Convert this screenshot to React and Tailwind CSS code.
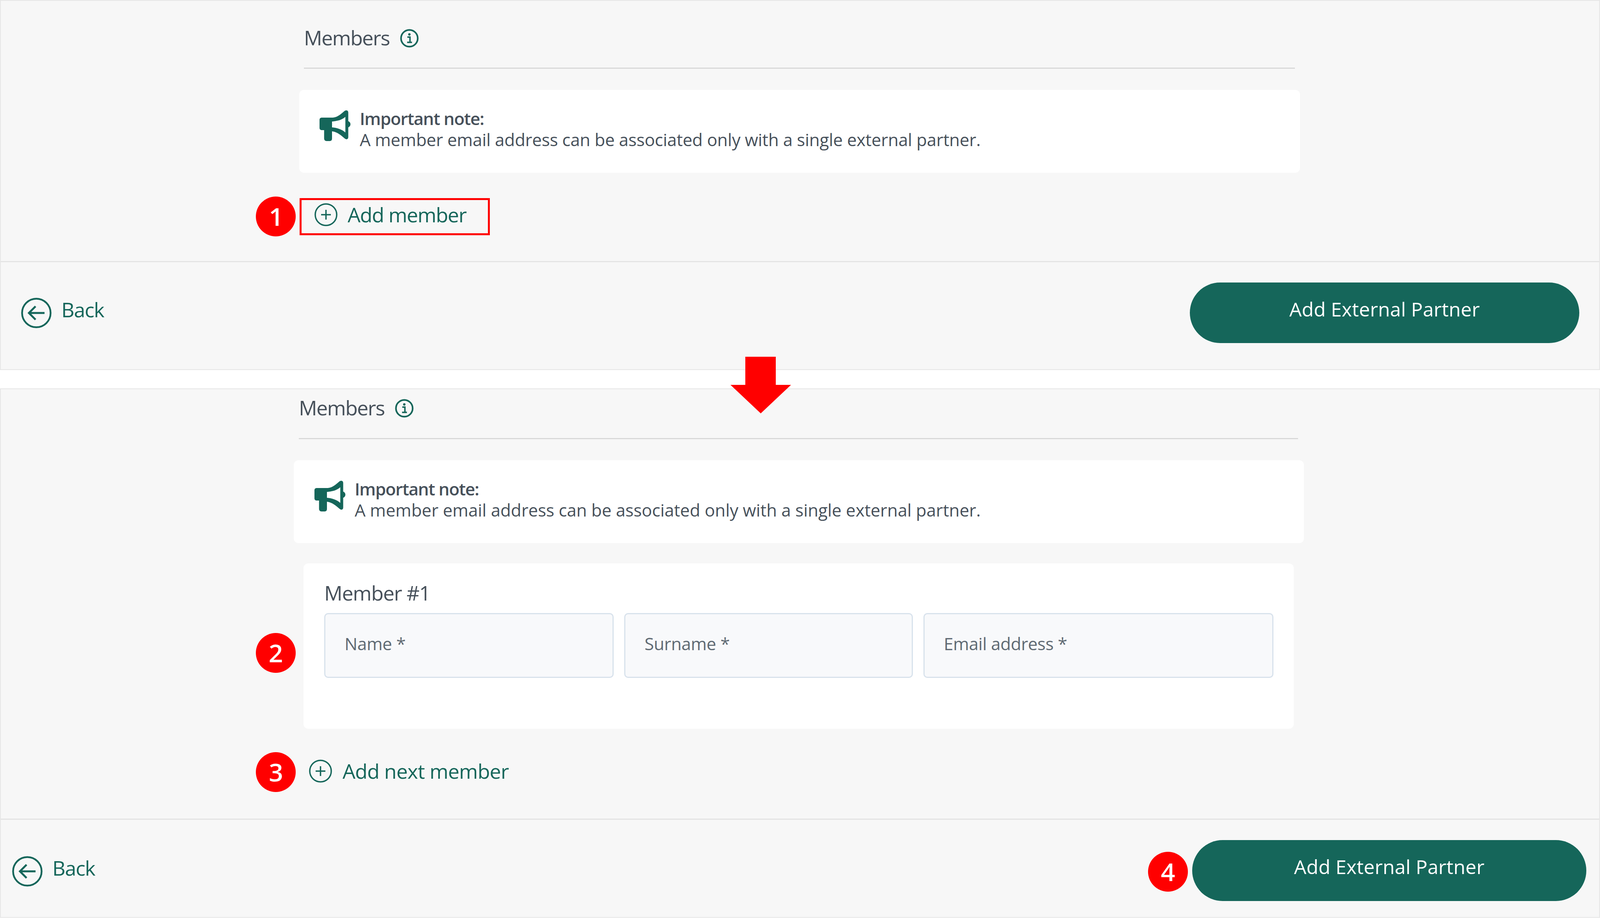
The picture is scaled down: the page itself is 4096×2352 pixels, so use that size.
import React from "react";

const teal = "#15665a";

function InfoIcon() {
  return (
    <svg width="48" height="48" viewBox="0 0 46 46" fill="none">
      <circle cx="23" cy="23" r="20.5" stroke={teal} strokeWidth="4" />
      <circle cx="23" cy="13.5" r="3" fill={teal} />
      <path d="M18 20h6.5v12M17.5 33h12" stroke={teal} strokeWidth="3.6" />
    </svg>
  );
}

function PlusIcon() {
  return (
    <svg width="59" height="59" viewBox="0 0 59 59" fill="none">
      <circle cx="29.5" cy="29.5" r="27.5" stroke={teal} strokeWidth="3.5" />
      <path d="M29.5 17v25M17 29.5h25" stroke={teal} strokeWidth="3.5" />
    </svg>
  );
}

function BackIcon() {
  return (
    <svg width="78" height="78" viewBox="0 0 78 78" fill="none">
      <circle cx="39" cy="39" r="36.5" stroke={teal} strokeWidth="4.5" />
      <path d="M60 39H21M37 22 20 39l17 17" stroke={teal} strokeWidth="5" />
    </svg>
  );
}

function Megaphone() {
  return (
    <svg width="80" height="80" viewBox="0 0 75 80" preserveAspectRatio="none" className="shrink-0">
      <path
        fillRule="evenodd"
        fill={teal}
        d="M6 20H32C44 19 52 10 60 3C65 0 69 2 69 7V29C76 32 76 42 69 45V70C69 76 64 77 60 73C52 66 44 57 30 55V73C30 78 28 80 24 80H17C13 80 11 77 11 73V52H6C2 52 0 50 0 46V26C0 22 2 20 6 20ZM30 30C42 29 54 26 62 18V58C54 50 42 46 30 45Z"
      />
    </svg>
  );
}

function Badge({ n, className }) {
  return (
    <div
      className={`absolute w-[102px] h-[102px] rounded-full bg-[#ff0000] flex items-center justify-center text-white text-[64px] font-semibold leading-none ${className}`}
    >
      {n}
    </div>
  );
}

function MembersHeader({ className }) {
  return (
    <div className={`flex items-center gap-[27px] border-b-[3px] border-[#d9d9d9] ${className}`}>
      <span className="text-[52px] leading-none tracking-[-1.7px] text-[#46505a] pb-[4px]">Members</span>
      <InfoIcon />
    </div>
  );
}

function NoteCard({ className, textClass }) {
  return (
    <div className={`h-[212px] bg-white rounded-[12px] flex items-start ${className}`}>
      <Megaphone />
      <div className="ml-[23px] mt-[-5px] text-[#46505a] text-[44px] leading-[54px]">
        <p className="font-semibold tracking-[-1.35px]">Important note:</p>
        <p className={textClass}>A member email address can be associated only with a single external partner.</p>
      </div>
    </div>
  );
}

function Field({ label, className }) {
  return (
    <div
      className={`h-[166px] bg-[#f8f9fb] border-[3px] border-[#d8e2ec] rounded-[10px] pl-[49px] pt-[48px] text-[44px] leading-[54px] tracking-[-0.4px] text-[#5f6a73] ${className}`}
    >
      {label}
    </div>
  );
}

function Footer({ className, backClass, buttonClass, badge }) {
  return (
    <div className={`mt-auto border-t-[3px] border-[#e4e4e4] flex items-center justify-between ${className}`}>
      <div className={`flex items-center gap-[25px] text-[52px] tracking-[-1.4px] leading-none ${backClass}`} style={{ color: teal }}>
        <BackIcon />
        <span className="pb-[18px]">Back</span>
      </div>
      <div className={`relative rounded-full bg-[#15665a] text-white text-[50px] tracking-[0.1px] flex items-center justify-center ${buttonClass}`}>
        {badge && <Badge n={4} className="left-[-113px] top-[30px]" />}
        <span className="pb-[18px]">Add External Partner</span>
      </div>
    </div>
  );
}

export default function App() {
  return (
    <div className="w-[4096px] h-[2352px] bg-white overflow-hidden relative font-['Open_Sans',sans-serif]">
      {/* top state */}
      <div className="h-[947px] bg-[#f7f7f7] border-2 border-[#e6e6e6] flex flex-col">
        <MembersHeader className="ml-[776px] w-[2537px] h-[174px] pt-[21px]" />
        <NoteCard className="mt-[54px] ml-[764px] w-[2562px] pl-[52px] pt-[51px]" textClass="tracking-[-0.26px]" />
        <div className="relative mt-[65px] ml-[765px] w-[487px] h-[95px] border-[5px] border-[#ff0000] flex items-center gap-[26px] pl-[33px] pb-[10px] text-[52px] tracking-[-1.4px] leading-none" style={{ color: teal }}>
          <Badge n={1} className="left-[-117px] top-[-9px]" />
          <PlusIcon />
          <span className="pb-[1px]">Add member</span>
        </div>
        <Footer className="h-[277px] pb-[14px]" backClass="pl-[52px]" buttonClass="mr-[51px] mb-[2px] w-[997px] h-[155px]" />
      </div>

      {/* arrow between the two states */}
      <svg className="absolute left-[1870px] top-[913px]" width="155" height="145" viewBox="0 0 155 145">
        <path d="M38 0H116V72H155L77.5 145L0 72H38Z" fill="#ff0000" />
      </svg>

      {/* bottom state */}
      <div className="mt-[47px] h-[1355px] bg-[#f7f7f7] border-2 border-[#e6e6e6] flex flex-col">
        <MembersHeader className="ml-[763px] w-[2558px] h-[128px] pb-[27px]" />
        <NoteCard className="mt-[54px] ml-[750px] w-[2586px] pl-[53px] pt-[51px]" textClass="tracking-[-0.09px]" />
        <div className="relative mt-[52px] ml-[775px] w-[2535px] h-[423px] bg-white rounded-[12px] pl-[53px] pr-[52px]">
          <Badge n={2} className="left-[-122px] top-[178px]" />
          <p className="h-[127px] pt-[48px] text-[52px] leading-[54px] tracking-[-1.3px] text-[#46505a]">Member #1</p>
          <div className="flex gap-[27px]">
            <Field label="Name *" className="w-[741px]" />
            <Field label="Surname *" className="w-[739px]" />
            <Field label="Email address *" className="w-[896px]" />
          </div>
        </div>
        <div className="relative mt-[79px] ml-[789px] flex items-center gap-[27px] text-[52px] tracking-[-0.85px] leading-none" style={{ color: teal }}>
          <Badge n={3} className="left-[-136px] top-[-19px]" />
          <PlusIcon />
          <span className="pb-[1px]">Add next member</span>
        </div>
        <Footer className="h-[252px] pt-[14px]" backClass="pl-[29px]" buttonClass="mr-[33px] mb-[4px] w-[1009px] h-[156px]" badge />
      </div>
    </div>
  );
}
